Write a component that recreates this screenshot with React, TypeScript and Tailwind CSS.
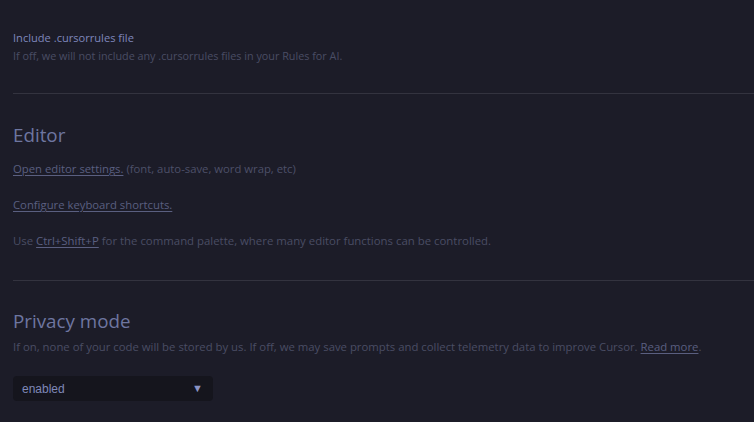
export default function App() {
  return (
    <div
      className="w-[754px] h-[422px] overflow-hidden bg-[#1c1c28] pl-[13px] text-[11px] text-[#4a4d64]"
      style={{ fontFamily: '"Open Sans", "Noto Sans", sans-serif' }}
    >
      {/* .cursorrules toggle */}
      <div className="pt-[29px]">
        <div className="leading-[18px] text-[11.1px] text-[#7f87bc]">Include .cursorrules file</div>
        <div className="leading-[18px] text-[10.8px]">
          If off, we will not include any .cursorrules files in your Rules for AI.
        </div>
      </div>

      <div className="mt-[28px] h-px bg-[#33333f]" />

      {/* Editor */}
      <div className="mt-[27px] text-[18.8px] leading-[28px] text-[#6e76a0]">Editor</div>
      <div className="mt-[12px] leading-[16px] text-[11.3px] text-[#5a5f80]">
        <span className="underline underline-offset-2">Open editor settings.</span>{" "}
        <span className="text-[#4d5068]">(font, auto-save, word wrap, etc)</span>
      </div>
      <div className="mt-[20px] leading-[16px] text-[11.3px] text-[#5a5f80]">
        <span className="underline underline-offset-2">Configure keyboard shortcuts.</span>
      </div>
      <div className="mt-[20px] leading-[16px] text-[11.4px]">
        Use <span className="underline underline-offset-2 text-[#5a5f80]">Ctrl+Shift+P</span> for the command
        palette, where many editor functions can be controlled.
      </div>

      <div className="mt-[31px] h-px bg-[#33333f]" />

      {/* Privacy mode */}
      <div className="mt-[26px] text-[18.8px] leading-[28px] text-[#6e76a0]">Privacy mode</div>
      <div className="mt-[4px] leading-[16px] text-[11.35px]">
        If on, none of your code will be stored by us. If off, we may save prompts and collect telemetry data to
        improve Cursor.{" "}
        <span className="underline underline-offset-2 text-[#5a5f80]">Read more</span>.
      </div>
      <div className="mt-[21px] w-[200px] h-[25px] rounded-[4px] bg-[#15151d] flex items-center justify-between pl-[9px] pr-[10px]">
        <span className="text-[12px] text-[#7f88b8]" style={{ fontFamily: '"Liberation Sans", Arial, sans-serif' }}>
          enabled
        </span>
        <span className="text-[11px] text-[#8a93c4]">▼</span>
      </div>
    </div>
  );
}
